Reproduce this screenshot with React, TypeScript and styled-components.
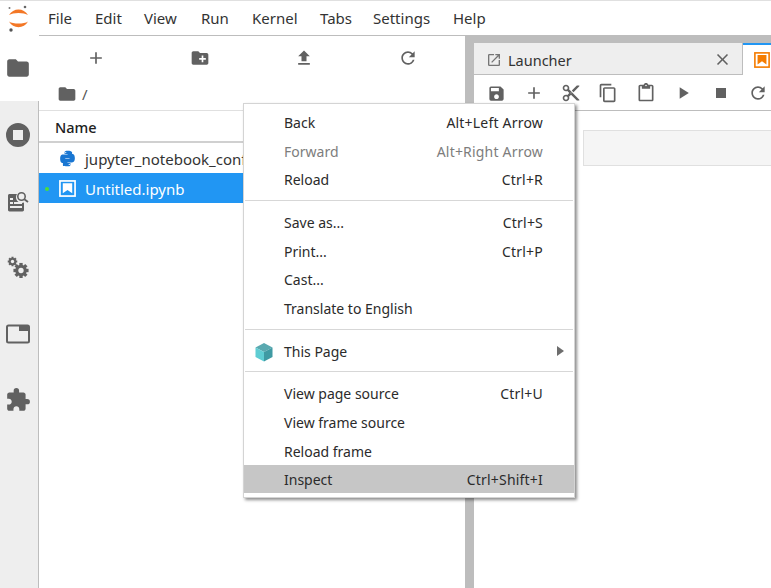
import React from 'react';
import styled, { createGlobalStyle } from 'styled-components';
import {
    MdAdd,
    MdClose,
    MdContentCopy,
    MdContentCut,
    MdContentPaste,
    MdCreateNewFolder,
    MdExtension,
    MdFileUpload,
    MdFolder,
    MdOutlineOpenInNew,
    MdPlayArrow,
    MdRefresh,
    MdSave,
    MdStop,
} from 'react-icons/md';

const GlobalStyle = createGlobalStyle`
    html, body {
        margin: 0;
        height: 100%;
        background: #fff;
        overflow: hidden;
    }
    * {
        box-sizing: border-box;
    }
`;

const Page = styled.div`
    position: relative;
    width: 771px;
    height: 588px;
    display: flex;
    flex-direction: column;
    overflow: hidden;
    font-family: 'Noto Sans', 'Open Sans', sans-serif;
    color: #212121;
`;

const TopBar = styled.div`
    height: 36px;
    display: flex;
    align-items: center;
    padding-left: 7px;
    border-top: 1px solid #e0e0e0;
    border-bottom: 1px solid #bdbdbd;
    flex-shrink: 0;
`;

const LogoSlot = styled.div`
    width: 41px;
    display: flex;
`;

const MenuLabel = styled.span<{ $width: number }>`
    width: ${(p) => p.$width}px;
    font-size: 15px;
    color: #333;
    white-space: nowrap;
`;

const Body = styled.div`
    flex: 1;
    display: flex;
    min-height: 0;
`;

const Rail = styled.div`
    width: 39px;
    display: flex;
    flex-direction: column;
    background: #eee;
    border-right: 1px solid #bdbdbd;
    flex-shrink: 0;
`;

const RailTab = styled.div<{ $active?: boolean }>`
    height: 66.4px;
    width: ${(p) => (p.$active ? '39px' : '38px')};
    display: flex;
    align-items: center;
    justify-content: center;
    padding-right: ${(p) => (p.$active ? '3px' : '2px')};
    color: #616161;
    background: ${(p) => (p.$active ? '#fff' : 'transparent')};
    margin-top: ${(p) => (p.$active ? '-1px' : '0')};
`;

const FileBrowser = styled.div`
    width: 426px;
    display: flex;
    flex-direction: column;
    flex-shrink: 0;
    background: #fff;
`;

const BrowserToolbar = styled.div`
    height: 40px;
    display: flex;
    padding: 0 5px;
    margin-top: 2px;
    color: #616161;
`;

const BrowserButton = styled.div`
    flex: 1;
    display: flex;
    align-items: center;
    justify-content: center;
`;

const Breadcrumb = styled.div`
    height: 32px;
    display: flex;
    align-items: center;
    gap: 5px;
    padding-left: 18px;
    font-size: 15px;
    color: #555;
`;

const ListHeader = styled.div`
    height: 33px;
    display: flex;
    align-items: center;
    padding: 1px 0 0 16px;
    font-size: 14.5px;
    font-weight: 500;
    color: #212121;
    border-top: 1px solid #e0e0e0;
    border-bottom: 2px solid #d0d0d0;
`;

const FileRow = styled.div<{ $selected?: boolean }>`
    position: relative;
    height: 30px;
    display: flex;
    align-items: center;
    gap: 9px;
    padding: 1px 0 0 20px;
    font-size: 15px;
    white-space: nowrap;
    color: ${(p) => (p.$selected ? '#fff' : '#333')};
    background: ${(p) => (p.$selected ? '#2196f3' : 'transparent')};
`;

const RunningDot = styled.span`
    position: absolute;
    left: 6px;
    top: 14px;
    width: 4px;
    height: 4px;
    border-radius: 50%;
    background: #4ade3a;
`;

const MainArea = styled.div`
    flex: 1;
    display: flex;
    flex-direction: column;
    padding: 7px 0 0 9px;
    background: #bdbdbd;
    min-width: 0;
`;

const TabBar = styled.div`
    height: 32px;
    display: flex;
    flex-shrink: 0;
    background: #bdbdbd;
`;

const LauncherTab = styled.div`
    width: 269px;
    display: flex;
    align-items: center;
    padding: 2px 10px 0 12px;
    gap: 6px;
    font-size: 14.5px;
    color: #333;
    background: #eee;
    border-right: 1px solid #bdbdbd;
    border-bottom: 1px solid #bdbdbd;
`;

const TabTitle = styled.span`
    flex: 1;
`;

const ActiveTab = styled.div`
    flex: 1;
    display: flex;
    align-items: center;
    padding-left: 11px;
    background: #fff;
    border-top: 2px solid #2196f3;
`;

const NotebookPanel = styled.div`
    flex: 1;
    display: flex;
    flex-direction: column;
    background: #fff;
`;

const NotebookToolbar = styled.div`
    height: 36px;
    display: flex;
    align-items: center;
    flex-shrink: 0;
    padding: 1px 0 0 3.5px;
    color: #616161;
    border-bottom: 1px solid #bdbdbd;
`;

const ToolButton = styled.div`
    width: 37.4px;
    flex-shrink: 0;
    display: flex;
    align-items: center;
    justify-content: center;
`;

const CellInput = styled.div`
    height: 36px;
    margin: 19px 0 0 109px;
    background: #f5f5f5;
    border: 1px solid #e0e0e0;
    border-right: none;
`;

const ContextMenu = styled.div`
    position: absolute;
    left: 243px;
    top: 103px;
    width: 332px;
    height: 395px;
    padding: 4px 0;
    background: #fff;
    border: 1px solid #d4d4d4;
    box-shadow: 2px 2px 3px rgba(0, 0, 0, 0.45);
    font-size: 14px;
`;

const MenuRow = styled.div<{ $disabled?: boolean; $highlighted?: boolean }>`
    position: relative;
    height: ${(p) => (p.$highlighted ? '28px' : '28.8px')};
    margin-top: ${(p) => (p.$highlighted ? '-0.6px' : '0')};
    display: flex;
    align-items: center;
    justify-content: space-between;
    padding: ${(p) => (p.$highlighted ? '2px' : '0')} 31px 0 40px;
    color: ${(p) => (p.$disabled ? '#7d7d7d' : '#2b2b2b')};
    background: ${(p) => (p.$highlighted ? '#c6c6c6' : 'transparent')};
`;

const MenuKeys = styled.span`
    letter-spacing: 0.2px;
`;

const Separator = styled.div`
    height: 1px;
    margin: 5.6px 1px 7px;
    background: #d7d7d7;
`;

const RowIcon = styled.span`
    position: absolute;
    left: 10px;
    top: 5px;
    display: flex;
`;

const SubmenuArrow = styled.span`
    position: absolute;
    right: 10px;
    top: 9px;
    width: 0;
    height: 0;
    border-left: 7px solid #6d6d6d;
    border-top: 5px solid transparent;
    border-bottom: 5px solid transparent;
`;

const JupyterLogo = () => (
    <svg width="24" height="27" viewBox="0 0 24 27">
        <circle cx="18" cy="2" r="1.300" fill="#666" />
        <circle cx="4" cy="25" r="1.700" fill="#555" />
        <circle cx="2.500" cy="3" r="1" fill="#777" />
        <path d="M2 10 C6 2.500 17 2.500 21 10 C17 7.200 6 7.200 2 10Z" fill="#f37726" />
        <path d="M2 16.500 C6 24 17 24 21 16.500 C17 19.300 6 19.300 2 16.500Z" fill="#f37726" />
    </svg>
);

const StopCircle = () => (
    <svg width="24" height="24" viewBox="0 0 24 24">
        <path
            fill="currentColor"
            fillRule="evenodd"
            d="M12 0a12 12 0 1 0 0 24a12 12 0 1 0 0-24ZM7 7h10v10H7Z"
        />
    </svg>
);

const PropertyInspector = () => (
    <svg width="22" height="22" viewBox="0 0 22 22">
        <path
            fill="currentColor"
            d="M1 5.500C1 4.700 1.700 4 2.500 4H10c-.6 1-1 2-1 3.200C9 10.400 11.600 13 14.800 13c.8 0 1.500-.2 2.200-.4V20c0 .8-.7 1.400-1.500 1.400h-13C1.700 21.400 1 20.800 1 20Z"
        />
        <rect x="3" y="8" width="3" height="2" fill="#eee" />
        <rect x="3" y="12" width="3" height="2" fill="#eee" />
        <rect x="7" y="12" width="8" height="2" fill="#eee" />
        <rect x="3" y="16" width="12" height="2" fill="#eee" />
        <circle cx="14.500" cy="6.500" r="3.700" fill="none" stroke="currentColor" strokeWidth="1.600" />
        <path d="M17.300 9.200L21 12" stroke="currentColor" strokeWidth="1.800" />
    </svg>
);

const Gear = ({ cx, cy, r }: { cx: number; cy: number; r: number }) => (
    <g>
        <circle cx={cx} cy={cy} r={r * 0.82} fill="currentColor" />
        {[0, 45, 90, 135].map((a) => (
            <rect
                key={a}
                x={cx - r * 0.24}
                y={cy - r * 1.08}
                width={r * 0.48}
                height={r * 2.16}
                fill="currentColor"
                transform={`rotate(${a} ${cx} ${cy})`}
            />
        ))}
        <circle cx={cx} cy={cy} r={r * 0.38} fill="#eee" />
    </g>
);

const BuildGears = () => (
    <svg width="22" height="22" viewBox="0 0 22 22">
        <Gear cx={5.500} cy={5.500} r={4.400} />
        <Gear cx={14} cy={14.500} r={7} />
    </svg>
);

const TabManager = () => (
    <svg width="24" height="20" viewBox="0 0 24 20">
        <rect x="1" y="1.500" width="22" height="17" rx="1.500" fill="none" stroke="currentColor" strokeWidth="2" />
        <rect x="13" y="1" width="10" height="6" fill="currentColor" />
    </svg>
);

const PythonIcon = () => (
    <svg width="17" height="17" viewBox="0 0 24 24">
        <path
            fill="#1976d2"
            d="M11.900 1C7.600 1 7.900 2.900 7.900 2.900V5.800h4.200v.6H5.600S1.600 6 1.600 12.200s3.500 6 3.500 6h2.100v-2.900s-.1-3.500 3.400-3.500h4.600s3.300.1 3.300-3.200V3.800S19.200 1 11.900 1ZM9.500 2.700a.9.900 0 1 1 0 1.800a.9.900 0 0 1 0-1.800Z"
        />
        <path
            fill="#1976d2"
            d="M12.100 23c4.300 0 4-1.900 4-1.900v-2.900h-4.200v-.6h6.500s4 .4 4-5.800s-3.500-6-3.500-6h-2.100v2.900s.1 3.500-3.400 3.500H8.800s-3.300-.1-3.300 3.200v5.800S4.800 23 12.100 23Zm2.400-1.700a.9.900 0 1 1 0-1.800a.9.900 0 0 1 0 1.800Z"
        />
    </svg>
);

const NotebookIcon = ({ color, size }: { color: string; size: number }) => (
    <svg width={size} height={size} viewBox="0 0 18 18">
        <rect x="1" y="1" width="16" height="16" fill="none" stroke={color} strokeWidth="1.800" />
        <path d="M4 3.500H14V14L9 10.500L4 14Z" fill={color} />
    </svg>
);

const CubeIcon = () => (
    <svg width="20" height="20" viewBox="0 0 20 20">
        <path d="M10 1L18.500 5.500L10 10L1.500 5.500Z" fill="#5aa9b0" />
        <path d="M1.500 5.500L10 10V19.500L1.500 15Z" fill="#5fcdd3" />
        <path d="M18.500 5.500L10 10V19.500L18.500 15Z" fill="#3f9aa3" />
    </svg>
);

const menus = [
    { label: 'File', width: 47 },
    { label: 'Edit', width: 49 },
    { label: 'View', width: 57 },
    { label: 'Run', width: 51 },
    { label: 'Kernel', width: 68 },
    { label: 'Tabs', width: 53 },
    { label: 'Settings', width: 80 },
    { label: 'Help', width: 40 },
];

type Entry = { label?: string; keys?: string; disabled?: boolean; highlighted?: boolean; separator?: boolean };

const entries: Entry[] = [
    { label: 'Back', keys: 'Alt+Left Arrow' },
    { label: 'Forward', keys: 'Alt+Right Arrow', disabled: true },
    { label: 'Reload', keys: 'Ctrl+R' },
    { separator: true },
    { label: 'Save as...', keys: 'Ctrl+S' },
    { label: 'Print...', keys: 'Ctrl+P' },
    { label: 'Cast...' },
    { label: 'Translate to English' },
    { separator: true },
    { label: 'This Page' },
    { separator: true },
    { label: 'View page source', keys: 'Ctrl+U' },
    { label: 'View frame source' },
    { label: 'Reload frame' },
    { label: 'Inspect', keys: 'Ctrl+Shift+I', highlighted: true },
];

const App: React.FC = () => (
    <Page>
        <GlobalStyle />
        <TopBar>
            <LogoSlot>
                <JupyterLogo />
            </LogoSlot>
            {menus.map((m) => (
                <MenuLabel key={m.label} $width={m.width}>
                    {m.label}
                </MenuLabel>
            ))}
        </TopBar>
        <Body>
            <Rail>
                <RailTab $active>
                    <MdFolder size={26} />
                </RailTab>
                <RailTab>
                    <StopCircle />
                </RailTab>
                <RailTab>
                    <PropertyInspector />
                </RailTab>
                <RailTab>
                    <BuildGears />
                </RailTab>
                <RailTab>
                    <TabManager />
                </RailTab>
                <RailTab>
                    <MdExtension size={26} />
                </RailTab>
            </Rail>
            <FileBrowser>
                <BrowserToolbar>
                    <BrowserButton>
                        <MdAdd size={20} />
                    </BrowserButton>
                    <BrowserButton>
                        <MdCreateNewFolder size={20} />
                    </BrowserButton>
                    <BrowserButton>
                        <MdFileUpload size={20} />
                    </BrowserButton>
                    <BrowserButton>
                        <MdRefresh size={20} />
                    </BrowserButton>
                </BrowserToolbar>
                <Breadcrumb>
                    <MdFolder size={20} color="#616161" />/
                </Breadcrumb>
                <ListHeader>Name</ListHeader>
                <FileRow>
                    <PythonIcon />
                    jupyter_notebook_config.py
                </FileRow>
                <FileRow $selected>
                    <RunningDot />
                    <NotebookIcon color="#fff" size={17} />
                    Untitled.ipynb
                </FileRow>
            </FileBrowser>
            <MainArea>
                <TabBar>
                    <LauncherTab>
                        <MdOutlineOpenInNew size={16} color="#757575" />
                        <TabTitle>Launcher</TabTitle>
                        <MdClose size={19} color="#616161" />
                    </LauncherTab>
                    <ActiveTab>
                        <NotebookIcon color="#f57c00" size={16} />
                    </ActiveTab>
                </TabBar>
                <NotebookPanel>
                    <NotebookToolbar>
                        <ToolButton>
                            <MdSave size={19} />
                        </ToolButton>
                        <ToolButton>
                            <MdAdd size={20} />
                        </ToolButton>
                        <ToolButton>
                            <MdContentCut size={20} />
                        </ToolButton>
                        <ToolButton>
                            <MdContentCopy size={20} />
                        </ToolButton>
                        <ToolButton>
                            <MdContentPaste size={20} />
                        </ToolButton>
                        <ToolButton>
                            <MdPlayArrow size={20} />
                        </ToolButton>
                        <ToolButton>
                            <MdStop size={20} />
                        </ToolButton>
                        <ToolButton>
                            <MdRefresh size={20} />
                        </ToolButton>
                    </NotebookToolbar>
                    <CellInput />
                </NotebookPanel>
            </MainArea>
        </Body>
        <ContextMenu>
            {entries.map((e, i) =>
                e.separator ? (
                    <Separator key={i} />
                ) : (
                    <MenuRow key={i} $disabled={e.disabled} $highlighted={e.highlighted}>
                        {e.label === 'This Page' && (
                            <RowIcon>
                                <CubeIcon />
                            </RowIcon>
                        )}
                        <span>{e.label}</span>
                        <MenuKeys>{e.keys}</MenuKeys>
                        {e.label === 'This Page' && <SubmenuArrow />}
                    </MenuRow>
                ),
            )}
        </ContextMenu>
    </Page>
);

export default App;
